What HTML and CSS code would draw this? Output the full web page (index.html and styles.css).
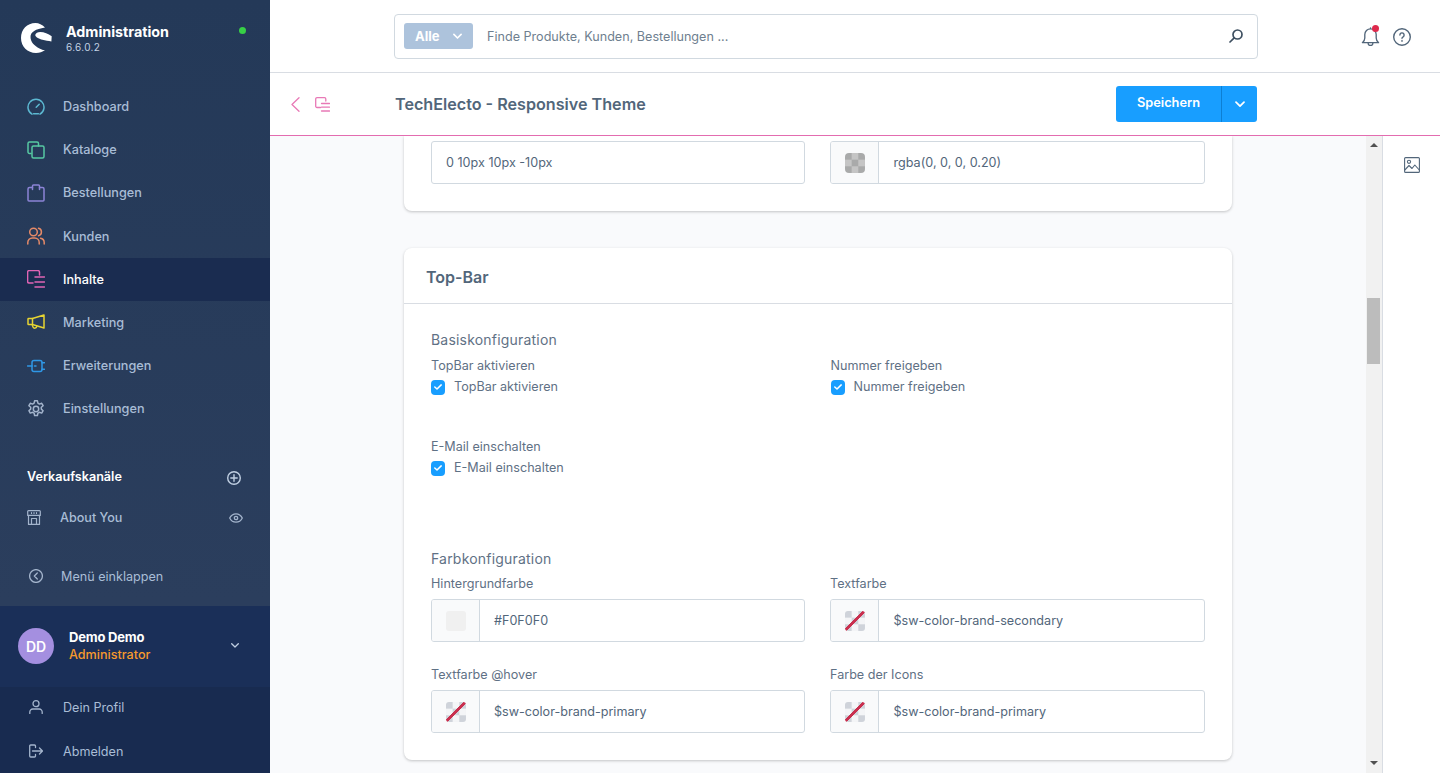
FILE: index.html
```html
<!DOCTYPE html>
<html lang="de">
<head>
<meta charset="utf-8">
<title>TechElecto - Responsive Theme</title>
<link rel="stylesheet" href="styles.css">
</head>
<body>
<div class="app">
  <aside class="sidebar">
    <header class="brand">
      <svg class="brand-logo" viewBox="0 0 32 30" width="32" height="30"><path fill="#fff" d="M24 4.500C21 1.500 18 0 14.500 0 6 0 0 6.500 0 15c0 8.500 6.500 15 15 15 3.500 0 6.500-1 9-3-2 .2-4-.5-5.500-1.500C13.500 23 9.500 19 9.500 14c0-5 5-8 14.500-9.500Z"/><path fill="#fff" d="M14.200 12c.5-2 2.500-3 5-3 4 0 8 2 11.500 4.200l-.3 5.300c-3-1-6-.8-9-1.800-3-.8-6.500-2-7.200-4.700Z"/></svg>
      <div class="brand-text"><strong>Administration</strong><span>6.6.0.2</span></div>
      <i class="status-dot"></i>
    </header>
    <nav class="nav">
      <a class="nav-item"><svg class="ic" viewBox="0 0 18 18" stroke="#5cb8d1"><path d="M5 16.200A8 8 0 1 1 13 16.200"/><path d="M6.500 15.800h5M9.200 9.300l3-3"/></svg>Dashboard</a>
      <a class="nav-item"><svg class="ic" viewBox="0 0 18 18" stroke="#57c9a3"><path d="M4 12.500H2.500a1.500 1.500 0 0 1-1.500-1.500V2.500A1.500 1.500 0 0 1 2.500 1H10a1.500 1.500 0 0 1 1.500 1.500V5"/><rect x="5" y="5" width="12" height="12" rx="1.500"/></svg>Kataloge</a>
      <a class="nav-item"><svg class="ic" viewBox="0 0 18 18" stroke="#8c84d6"><path d="M5.500 3.500h-3A1.500 1.500 0 0 0 1 5v11a1 1 0 0 0 1 1h14a1 1 0 0 0 1-1V5a1.500 1.500 0 0 0-1.500-1.500h-3"/><path d="M5.500 5.500V2A1 1 0 0 1 6.500 1h5a1 1 0 0 1 1 1v3.500"/></svg>Bestellungen</a>
      <a class="nav-item"><svg class="ic" viewBox="0 0 18 18" stroke="#e58a68"><circle cx="6.500" cy="5" r="3.800"/><path d="M.8 17v-1.500A4.500 4.500 0 0 1 5.300 11h2.400a4.500 4.500 0 0 1 4.500 4.500V17"/><path d="M11.500 1.300a3.800 3.800 0 0 1 0 7.400M13.500 11.200a4.400 4.400 0 0 1 3.700 4.300V17"/></svg>Kunden</a>
      <a class="nav-item is-active"><svg class="ic" viewBox="0 0 18 18" stroke="#e064b4"><path d="M6 13H2A1.500 1.500 0 0 1 .6 11.500V2A1.500 1.500 0 0 1 2 .6h9A1.500 1.500 0 0 1 12.500 2v3"/><path d="M8 7h9.500M8 12h9.500M8 17h9.500"/></svg>Inhalte</a>
      <a class="nav-item"><svg class="ic" viewBox="0 0 18 18" stroke="#e6d432"><path d="M17 2 5.500 5.500H1.500a.5.500 0 0 0-.5.500v5a.5.500 0 0 0 .5.500h4L17 15V2Z"/><path d="M5.500 5.500v6M5.300 12l.7 2a2 2 0 0 0 3.800-.8"/></svg>Marketing</a>
      <a class="nav-item"><svg class="ic" viewBox="0 0 18 18" stroke="#2f97e6"><rect x="5" y="3.600" width="10" height="10.800" rx="2"/><path d="M.5 9H5M7.500 9h1.500M15 5.700h2.500M15 12.300h2.500"/></svg>Erweiterungen</a>
      <a class="nav-item"><svg class="ic" viewBox="0 0 18 18" stroke="#a3b4cc"><circle cx="9" cy="9" r="2.700"/><path d="M7.600 .8h2.800l.5 2.400 1.500.9 2.300-.8 1.400 2.400-1.800 1.600v1.800l1.800 1.600-1.400 2.400-2.300-.8-1.500.9-.5 2.400H7.600l-.5-2.400-1.500-.9-2.300.8-1.400-2.400 1.800-1.600V7.300L1.900 5.700l1.400-2.400 2.300.8 1.500-.9Z"/></svg>Einstellungen</a>
    </nav>
    <section class="channels">
      <div class="channels-head"><span>Verkaufskanäle</span><svg class="ic-small" viewBox="0 0 14 14" stroke="#c0cfe2"><circle cx="7" cy="7" r="6.300"/><path d="M7 3.800v6.400M3.800 7h6.400"/></svg></div>
      <div class="channel"><svg class="ic-channel" viewBox="0 0 14 15" stroke="#a3b4cc"><path d="M1.500.6h11a.8.800 0 0 1 .8.800v4H.7v-4a.8.800 0 0 1 .8-.8ZM1.500 5.400v9h11v-9M4.500 2.500v1M7 2.500v1M9.500 2.500v1M4.500 14.400V8.500h5v5.900"/></svg><span>About You</span><svg class="ic-eye" viewBox="0 0 14 10" stroke="#a3b4cc"><path d="M.7 5C3.500-.6 10.500-.6 13.300 5 10.500 10.600 3.500 10.600.7 5Z"/><circle cx="7" cy="5" r="1.700"/></svg></div>
    </section>
    <a class="collapse"><svg class="ic-collapse" viewBox="0 0 14 14" stroke="#a3b4cc"><circle cx="7" cy="7" r="6.400"/><path d="M8.300 4 5.300 7l3 3"/></svg>Menü einklappen</a>
    <section class="user">
      <div class="avatar">DD</div>
      <div class="user-text"><strong>Demo Demo</strong><span>Administrator</span></div>
      <svg class="user-caret" viewBox="0 0 8 5" stroke="#c0cfe2"><path d="M.7.700 4 4 7.300.7"/></svg>
    </section>
    <section class="user-menu">
      <a class="user-link"><svg class="ic-user" viewBox="0 0 14 14" stroke="#a3b4cc"><circle cx="7" cy="3.700" r="3"/><path d="M.8 13.500v-1.500a3 3 0 0 1 3-3h6.400a3 3 0 0 1 3 3v1.500"/></svg>Dein Profil</a>
      <a class="user-link"><svg class="ic-user" viewBox="0 0 14 14" stroke="#a3b4cc"><path d="M6.500 3.500V2a1 1 0 0 0-1-1H1.700a1 1 0 0 0-1 1v10a1 1 0 0 0 1 1h3.800a1 1 0 0 0 1-1v-1.500M3.500 7h10M10.500 4l3 3-3 3"/></svg>Abmelden</a>
    </section>
  </aside>

  <main class="main">
    <header class="topbar">
      <div class="search">
        <span class="search-type">Alle<svg class="type-caret" viewBox="0 0 10 7" stroke="#fff"><path d="M1 1.200 5 5.200 9 1.200"/></svg></span>
        <span class="search-placeholder">Finde Produkte, Kunden, Bestellungen ...</span>
        <svg class="search-icon" viewBox="0 0 14 14" stroke="#3d4f60"><circle cx="8.500" cy="5.500" r="4.500"/><path d="M5.200 8.800 1 13"/></svg>
      </div>
      <div class="top-actions">
        <span class="bell"><svg class="ic-bell" viewBox="0 0 20 20" stroke="#52667a"><path d="M1.500 16.500h17c-1.700-1.500-2.500-3-2.500-5V8A6 6 0 0 0 4 8v3.500c0 2-.8 3.500-2.500 5ZM7.500 17a2.500 2.500 0 0 0 5 0M10 2V1"/></svg><i class="bell-dot"></i></span>
        <svg class="ic-help" viewBox="0 0 18 18" stroke="#52667a"><circle cx="9" cy="9" r="8.300"/><path d="M6.900 7a2.100 2.100 0 1 1 3.200 1.800c-.7.400-1.100.8-1.100 1.500"/><path d="M9 12.500v.8"/></svg>
      </div>
    </header>
    <header class="smartbar">
      <div class="crumbs">
        <svg class="ic-back" viewBox="0 0 9 15" stroke="#e879b6"><path d="M8 .7 1 7.500 8 14.300"/></svg>
        <svg class="ic-module" viewBox="0 0 15 15" stroke="#e879b6"><path d="M5.500 10.500H2A1.300 1.300 0 0 1 .7 9.200V2A1.300 1.300 0 0 1 2 .7h7.500A1.300 1.300 0 0 1 10.800 2v2"/><path d="M6.500 6.500h8M6.500 10.200h8M6.500 14h8"/></svg>
      </div>
      <h1 class="page-title">TechElecto - Responsive Theme</h1>
      <div class="save">
        <span class="save-main">Speichern</span>
        <span class="save-toggle"><svg class="save-caret" viewBox="0 0 10 7" stroke="#fff"><path d="M1 1.200 5 5.200 9 1.200"/></svg></span>
      </div>
    </header>
    <div class="workspace">
      <div class="content">
        <section class="card card-clipped">
          <div class="grid">
            <div class="input"><span class="input-value">0 10px 10px -10px</span></div>
            <div class="input"><span class="swatch-box"><i class="swatch swatch-checker"></i></span><span class="input-value">rgba(0, 0, 0, 0.20)</span></div>
          </div>
        </section>
        <section class="card">
          <h2 class="card-title">Top-Bar</h2>
          <div class="card-body">
            <h3 class="group-title">Basiskonfiguration</h3>
            <div class="grid grid-checks">
              <div class="check-field"><label class="label">TopBar aktivieren</label><div class="check"><span class="box"><svg viewBox="0 0 8 6" stroke="#fff"><path d="M.8 3 3 5 7.200.9"/></svg></span>TopBar aktivieren</div></div>
              <div class="check-field"><label class="label">Nummer freigeben</label><div class="check"><span class="box"><svg viewBox="0 0 8 6" stroke="#fff"><path d="M.8 3 3 5 7.200.9"/></svg></span>Nummer freigeben</div></div>
              <div class="check-field"><label class="label">E-Mail einschalten</label><div class="check"><span class="box"><svg viewBox="0 0 8 6" stroke="#fff"><path d="M.8 3 3 5 7.200.9"/></svg></span>E-Mail einschalten</div></div>
            </div>
            <h3 class="group-title group-second">Farbkonfiguration</h3>
            <div class="grid grid-colors">
              <div class="field"><label class="label">Hintergrundfarbe</label><div class="input"><span class="swatch-box"><i class="swatch swatch-light"></i></span><span class="input-value">#F0F0F0</span></div></div>
              <div class="field"><label class="label">Textfarbe</label><div class="input"><span class="swatch-box"><i class="swatch swatch-none"></i></span><span class="input-value">$sw-color-brand-secondary</span></div></div>
              <div class="field"><label class="label">Textfarbe @hover</label><div class="input"><span class="swatch-box"><i class="swatch swatch-none"></i></span><span class="input-value">$sw-color-brand-primary</span></div></div>
              <div class="field"><label class="label">Farbe der Icons</label><div class="input"><span class="swatch-box"><i class="swatch swatch-none"></i></span><span class="input-value">$sw-color-brand-primary</span></div></div>
            </div>
          </div>
        </section>
      </div>
      <div class="scrollbar">
        <i class="arrow arrow-up"></i>
        <i class="thumb"></i>
        <i class="arrow arrow-down"></i>
      </div>
      <aside class="rail">
        <svg class="ic-media" viewBox="0 0 16 16" stroke="#52667a"><rect x=".6" y=".6" width="14.800" height="14.800" rx="1"/><circle cx="5" cy="4.800" r="1.600"/><path d="M.8 13 5 8.500l3 3 2.800-3.500 4.500 5"/></svg>
      </aside>
    </div>
  </main>
</div>
</body>
</html>
```
FILE: styles.css
```css
* { box-sizing: border-box; }
html, body { margin: 0; height: 100%; overflow: hidden; }
body { font-family: Inter, "Liberation Sans", sans-serif; font-size: 12.600px; color: #52667a; background: #fff; }
svg { fill: none; stroke-width: 1.300; stroke-linecap: round; stroke-linejoin: round; display: block; flex: none; }
.app { display: flex; height: 773px; }

.sidebar { width: 270px; flex: none; display: flex; flex-direction: column; background: linear-gradient(#243958, #2b3e5d 78%); color: #a9bdd6; }
.brand { height: 84.950px; flex: none; display: flex; align-items: flex-start; padding: 23px 24px 0 21px; }
.brand-logo { margin-right: 13px; }
.brand-text { display: flex; flex-direction: column; flex: 1; }
.brand-text strong { color: #fff; font-size: 14.300px; font-weight: 700; line-height: 18px; }
.brand-text span { color: #c3d2e4; font-size: 10px; line-height: 10px; font-weight: 400; margin-top: 1px; letter-spacing: .3px; }
.status-dot { width: 7px; height: 7px; border-radius: 50%; background: #37d046; margin-top: 4px; }
.nav { display: flex; flex: none; flex-direction: column; }
.nav-item { height: 43.200px; flex: none; display: flex; align-items: center; padding-left: 27px; font-size: 12.700px; font-weight: 500; }
.ic { width: 18px; height: 18px; margin-right: 18px; stroke-width: 1.500; }
.is-active { background: #1a2c50; color: #fff; }
.channels { flex: none; margin-top: 33.950px; }
.channels-head { height: 24px; display: flex; align-items: center; justify-content: space-between; padding: 0 29px 0 27px; color: #fff; font-weight: 600; font-size: 12.600px; }
.ic-small { width: 14px; height: 14px; margin-top: 3px; stroke-width: 1.400; }
.channel { height: 24px; margin-top: 17px; display: flex; align-items: center; padding: 0 27px 0 27px; font-weight: 500; }
.channel span { flex: 1; }
.ic-channel { width: 14px; height: 15px; margin-right: 19px; stroke-width: 1.200; }
.ic-eye { width: 14px; height: 10px; margin-top: 1px; }
.collapse { flex: none; height: 24px; margin-top: 35px; display: flex; align-items: center; padding-left: 29px; font-weight: 400; }
.ic-collapse { width: 14px; height: 14px; margin-right: 18px; }
.user { height: 81px; flex: none; margin-top: 17.500px; background: #1a2f58; display: flex; align-items: center; padding: 0 31px 0 18px; }
.avatar { width: 36px; height: 36px; border-radius: 50%; background: #a48fe0; color: #fff; font-size: 14px; font-weight: 600; display: flex; align-items: center; justify-content: center; margin-right: 15px; }
.user-text { flex: 1; display: flex; flex-direction: column; }
.user-text strong { color: #fff; font-size: 13px; font-weight: 700; line-height: 17px; letter-spacing: -.2px; }
.user-text span { color: #f79a2d; font-size: 12.600px; font-weight: 500; line-height: 17px; }
.user-caret { width: 8px; height: 5px; margin-bottom: 2px; }
.user-menu { flex: 1; min-height: 0; background: #182b50; display: flex; flex-direction: column; }
.user-link { flex: none; height: 41px; margin-bottom: 3px; display: flex; align-items: center; padding-left: 29px; font-weight: 400; }
.ic-user { width: 14px; height: 14px; margin-right: 20px; }

.main { flex: 1; min-width: 0; display: flex; flex-direction: column; }
.topbar { height: 73px; flex: none; border-bottom: 1px solid #d9dde3; display: flex; align-items: center; padding: 0 29px 0 124px; }
.search { width: 864px; height: 45px; border: 1px solid #d1d9e0; border-radius: 4px; display: flex; align-items: center; padding: 0 14px 0 9px; }
.search-type { width: 69px; height: 26px; background: #adc3dc; border-radius: 3px; color: #fff; font-weight: 700; font-size: 13px; display: flex; align-items: center; padding-left: 11px; }
.type-caret { width: 9px; height: 7px; margin-left: 13px; stroke-width: 1.800; }
.search-placeholder { flex: 1; margin-left: 14px; color: #6f7f8f; }
.search-icon { width: 14px; height: 14px; stroke-width: 1.700; }
.top-actions { margin-left: auto; display: flex; align-items: center; gap: 13px; margin-top: 1px; }
.bell { position: relative; display: block; }
.ic-bell { width: 19px; height: 19px; stroke-width: 1.400; }
.bell-dot { position: absolute; top: -2px; right: 1px; width: 7px; height: 7px; border-radius: 50%; background: #de294c; }
.ic-help { width: 18px; height: 18px; stroke-width: 1.400; }

.smartbar { height: 63px; flex: none; border-bottom: 1px solid #e36cb0; display: flex; align-items: center; padding: 0 183px 0 21px; }
.crumbs { width: 104px; display: flex; align-items: center; gap: 15px; }
.ic-back { width: 9px; height: 15px; }
.ic-module { width: 15px; height: 15px; }
.page-title { flex: 1; margin: 0; font-size: 16.150px; font-weight: 600; color: #52667a; }
.save { width: 141px; height: 36px; background: #189eff; border-radius: 3px; color: #fff; display: flex; }
.save-main { width: 106px; display: flex; align-items: center; justify-content: center; padding-bottom: 3px; font-weight: 600; font-size: 12.800px; border-right: 1px solid #0d7fd3; }
.save-toggle { flex: 1; display: flex; align-items: center; justify-content: center; }
.save-caret { width: 10px; height: 7px; stroke-width: 1.700; }

.workspace { flex: 1; min-height: 0; display: flex; }
.content { width: 1096px; flex: none; overflow: hidden; background: #f9fafc; padding: 0 134px; }
.card { background: #fff; border-radius: 8px; box-shadow: 0 1px 3px rgba(0, 0, 0, .22); margin-bottom: 37px; }
.card-clipped { border-radius: 0 0 8px 8px; padding: 5px 27px 27px; }
.card-title { margin: 0; height: 56px; padding: 2px 0 0 22px; display: flex; align-items: center; font-size: 16px; font-weight: 600; border-bottom: 1px solid #d9dde3; color: #52667a; }
.card-body { padding: 26px 27px 27px; }
.grid { display: grid; grid-template-columns: 374px 375px; column-gap: 25px; }
.grid > :nth-child(even) .input-value { padding-left: 14.500px; }
.group-title { margin: 0; height: 20px; font-size: 14px; font-weight: 400; line-height: 20px; letter-spacing: .2px; color: #5f7185; }
.group-second { margin-top: 30px; }
.grid-checks { margin-top: 7px; grid-template-columns: 374.500px 374.500px; grid-auto-rows: 81px; }
.grid-colors { margin-top: 6px; row-gap: 24px; }
.label { display: block; height: 16px; line-height: 18px; color: #5f7185; }
.check { display: flex; align-items: center; height: 18px; margin-top: 4px; color: #5f7185; }
.box { width: 14px; height: 15px; margin: 2px 9px 0 0; background: #189eff; border-radius: 4px; display: flex; align-items: center; justify-content: center; }
.box svg { width: 8px; height: 6px; stroke-width: 1.500; }
.field .label { margin-bottom: 8px; }
.input { height: 43px; border: 1px solid #d1d9e0; border-radius: 3px; background: #fff; display: flex; align-items: center; overflow: hidden; }
.input-value { padding-left: 14px; color: #52667a; }
.swatch-box { width: 48px; height: 100%; background: #f9fafb; border-right: 1px solid #d1d9e0; display: flex; align-items: center; justify-content: center; }
.swatch { display: block; width: 20px; height: 20px; border-radius: 3px; }
.swatch-light { background: #f0f0f0; }
.swatch-checker { border-radius: 4px; background: conic-gradient(#c5c5c5 25%, #a9aaaa 0 50%, #c5c5c5 0 75%, #a9aaaa 0) 0 0 / 13.300px 13.300px; }
.swatch-none { background: linear-gradient(to bottom right, transparent 45%, #c9304f 45% 55%, transparent 55%), conic-gradient(#f4f5f7 25%, #cfd3da 0 50%, #f4f5f7 0 75%, #cfd3da 0) 0 0 / 13.300px 13.300px; }

.scrollbar { width: 16px; flex: none; background: #f1f1f1; display: flex; flex-direction: column; align-items: center; padding-top: 7px; padding-bottom: 8px; }
.arrow { width: 0; height: 0; border-left: 4px solid transparent; border-right: 4px solid transparent; }
.arrow-up { border-bottom: 4px solid #505050; }
.arrow-down { border-top: 4px solid #505050; margin-top: auto; }
.thumb { width: 13px; height: 66px; margin-top: 151px; align-self: flex-start; margin-left: 1px; background: #bcbcbc; }
.rail { flex: 1; border-left: 1px solid #d9dde3; background: #fff; padding: 21px 0 0 21px; }
.ic-media { width: 16px; height: 16px; stroke-width: 1.100; }
```
